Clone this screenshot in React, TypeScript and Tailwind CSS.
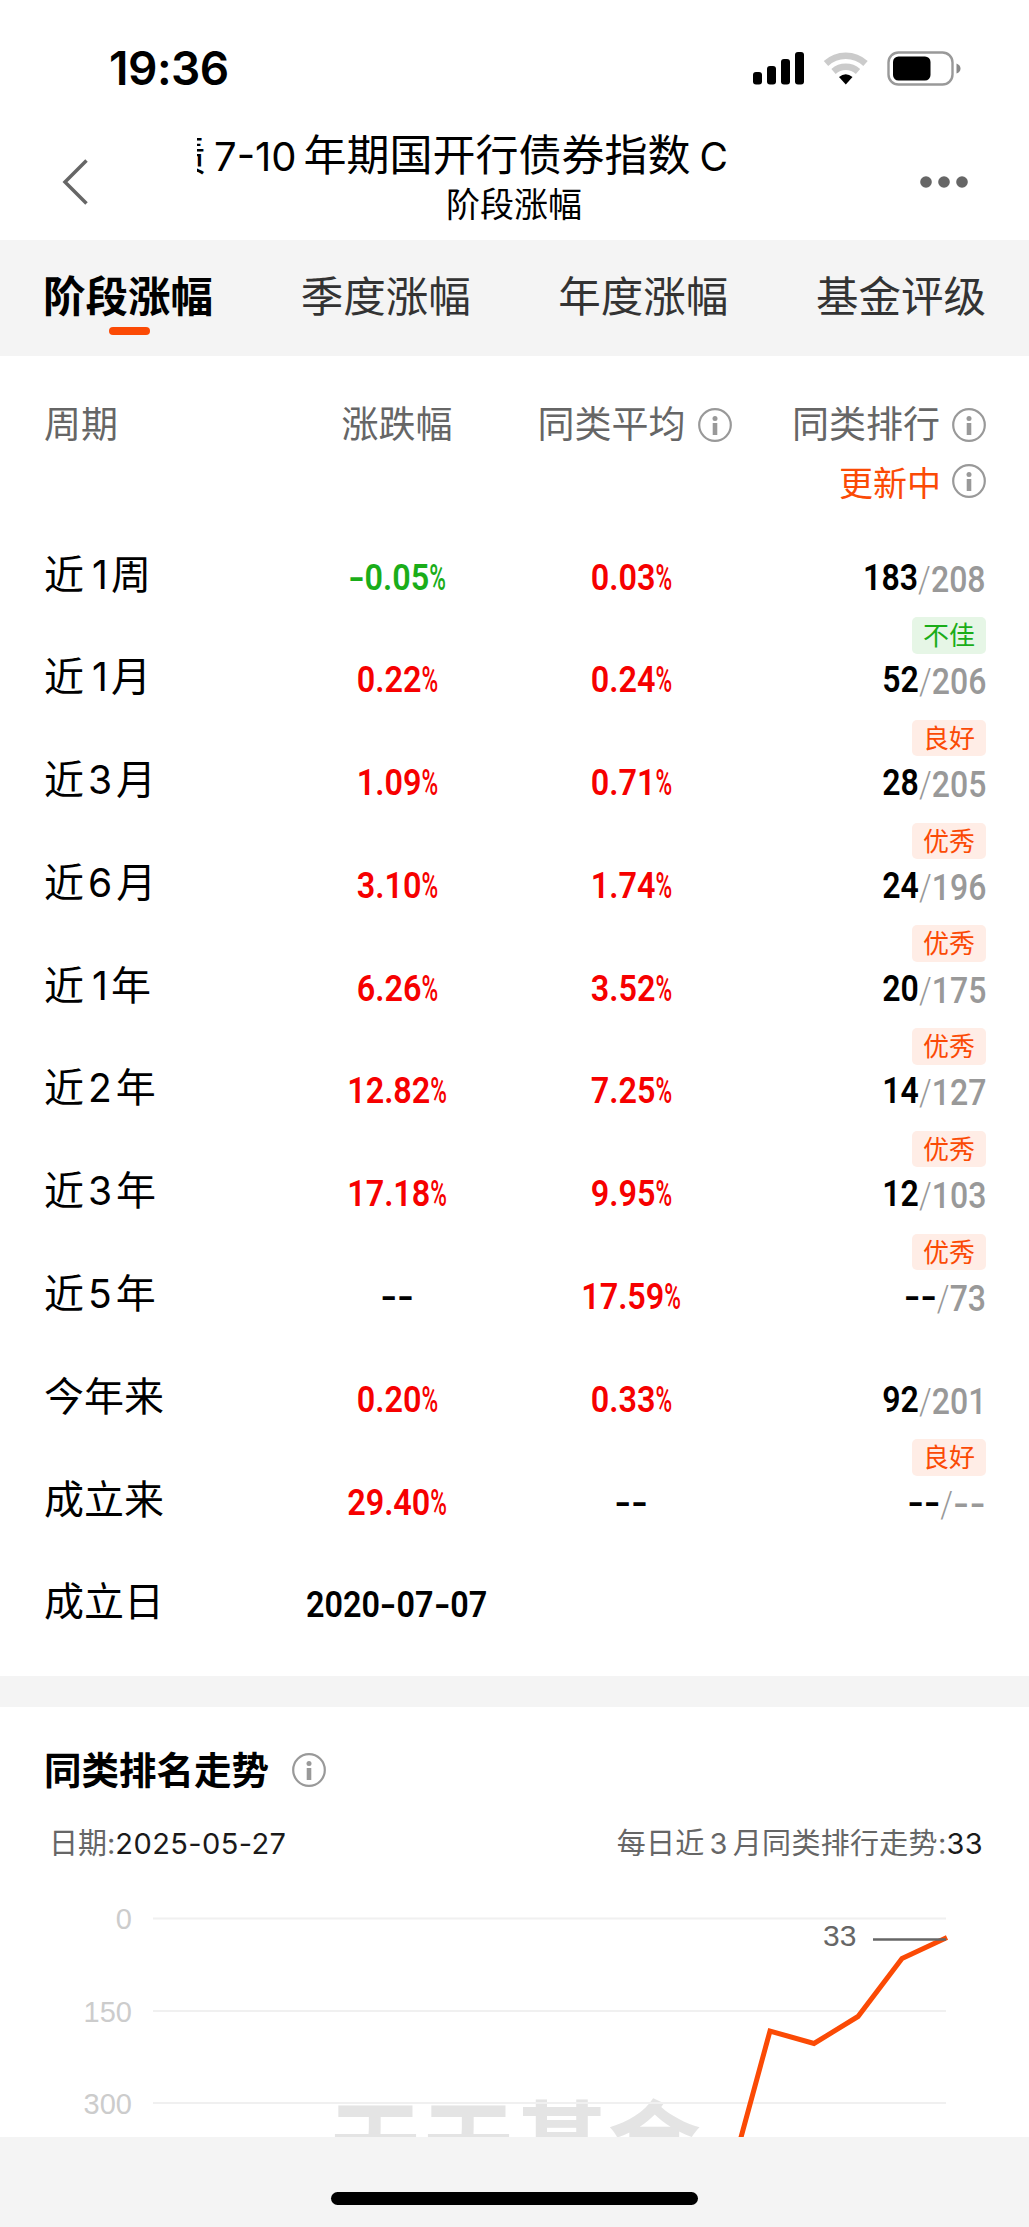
import clsx from 'clsx';

interface Row {
  label: string;
  change: string;
  average?: string;
  rank?: string;
  total?: string;
  grade?: string;
}

const tabs = ['阶段涨幅', '季度涨幅', '年度涨幅', '基金评级'];

const rows: Row[] = [
  { label: '近1周', change: '-0.05%', average: '0.03%', rank: '183', total: '208', grade: '不佳' },
  { label: '近1月', change: '0.22%', average: '0.24%', rank: '52', total: '206', grade: '良好' },
  { label: '近3月', change: '1.09%', average: '0.71%', rank: '28', total: '205', grade: '优秀' },
  { label: '近6月', change: '3.10%', average: '1.74%', rank: '24', total: '196', grade: '优秀' },
  { label: '近1年', change: '6.26%', average: '3.52%', rank: '20', total: '175', grade: '优秀' },
  { label: '近2年', change: '12.82%', average: '7.25%', rank: '14', total: '127', grade: '优秀' },
  { label: '近3年', change: '17.18%', average: '9.95%', rank: '12', total: '103', grade: '优秀' },
  { label: '近5年', change: '--', average: '17.59%', rank: '--', total: '73' },
  { label: '今年来', change: '0.20%', average: '0.33%', rank: '92', total: '201', grade: '良好' },
  { label: '成立来', change: '29.40%', average: '--', rank: '--', total: '--' },
  { label: '成立日', change: '2020-07-07' },
];

const InfoIcon = () => (
  <svg className="size-[34px] shrink-0" viewBox="0 0 34 34" fill="none">
    <circle cx="17" cy="17" r="15.8" stroke="#999" strokeWidth="2.2" />
    <circle cx="17" cy="10.5" r="2.5" fill="#999" />
    <path d="M17 15v12" stroke="#999" strokeWidth="4.6" />
  </svg>
);

// Narrow figures: wide hyphens and a light, condensed percent sign
const Figure = ({ value }: { value: string }) => (
  <>
    {value.split('').map((char, i) => {
      if (char === '-') {
        return (
          <span key={i} className="inline-block w-[19px] text-center">
            <span className="inline-block scale-x-[1.4]">-</span>
          </span>
        );
      }
      if (char === '%') {
        return (
          <span key={i} className="inline-block w-[19px] origin-left scale-x-[.7] font-medium">
            %
          </span>
        );
      }
      return <span key={i}>{char}</span>;
    })}
  </>
);

const valueColor = (value: string) => {
  if (value.startsWith('-0')) return 'text-[#1aad19]';
  return value.endsWith('%') ? 'text-[#f60000]' : 'text-black';
};

const Value = ({ value }: { value: string }) => (
  <div className="flex justify-center pt-[4px]">
    <span
      className={clsx(
        'font-[Roboto,sans-serif] text-[37px] font-semibold leading-[60px] whitespace-nowrap scale-x-[.875]',
        valueColor(value)
      )}
    >
      <Figure value={value} />
    </span>
  </div>
);

const Label = ({ text }: { text: string }) => (
  <div className="pt-[1px] text-[40px] leading-[60px] whitespace-nowrap">
    {text.split('').map((char, i) =>
      /\d/.test(char) ? (
        <span
          key={i}
          className={clsx('text-[39px]', char === '1' ? 'mr-[3px] ml-[8px]' : 'mx-[4px]')}
        >
          {char}
        </span>
      ) : (
        char
      )
    )}
  </div>
);

const StatusBar = () => (
  <div className="flex h-[130px] items-start justify-between pr-[68px] pl-[109px]">
    <span className="mt-[38px] text-[46px] leading-[60px] font-semibold tracking-[-0.5px]">
      19:36
    </span>
    <svg className="mt-[48px] h-[40px] w-[208px]" viewBox="0 0 208 40" fill="none">
      <rect x="0" y="24" width="9" height="12.5" rx="3" fill="#000" />
      <rect x="14" y="18" width="9" height="18.500" rx="3" fill="#000" />
      <rect x="28" y="11" width="9" height="25.500" rx="3" fill="#000" />
      <rect x="42" y="4" width="9" height="32.500" rx="3" fill="#000" />
      <path d="M73 15.500a29 29 0 0 1 39.500 0" stroke="#cbcbcb" strokeWidth="6.500" />
      <path d="M80.500 23.500a18.500 18.500 0 0 1 24.500 0" stroke="#cbcbcb" strokeWidth="6.500" />
      <path d="M86 29q6.800-5.500 13.500 0l-6.700 7.500z" fill="#000" />
      <rect x="135.500" y="4.500" width="64" height="32" rx="10" stroke="#999" strokeWidth="2.400" />
      <rect x="140" y="8.500" width="37.500" height="24" rx="5.500" fill="#000" />
      <path d="M203.500 15.500q4 1.500 4 5t-4 5z" fill="#888" />
    </svg>
  </div>
);

const Header = () => (
  <div className="flex h-[110px] items-start pl-[62px]">
    <svg className="mt-[29px] h-[46px] w-[26px]" viewBox="0 0 26 46" fill="none">
      <path d="M24.500 1.500 3 23l21.500 21.500" stroke="#666" strokeWidth="3.500" />
    </svg>
    <div className="ml-[109px] w-[634px] pt-px">
      <div className="flex h-[50px] items-center overflow-hidden">
        <div className="-ml-[34px] text-[43px] leading-[50px] whitespace-nowrap">
          债<span className="mr-[7px] ml-[8px] text-[40px]">7-10</span>年期国开行债券指数
          <span className="ml-[9px] text-[39px]">C</span>
        </div>
      </div>
      <div className="text-center text-[34px] leading-[47px]">阶段涨幅</div>
    </div>
    <svg className="mt-[46px] ml-[89px] h-[12px] w-[48px]" viewBox="0 0 48 12" fill="#666">
      <circle cx="6" cy="6" r="5.800" />
      <circle cx="24" cy="6" r="5.800" />
      <circle cx="42" cy="6" r="5.800" />
    </svg>
  </div>
);

const RankTrend = () => (
  <section className="h-[430px] overflow-hidden">
    <div className="flex items-center gap-[23px] pt-[36.500px] pl-[44px]">
      <h2 className="pt-[1px] text-[37.5px] leading-[52px] font-bold">同类排名走势</h2>
      <InfoIcon />
    </div>
    <div className="mt-[24px] flex justify-between pr-[46px] pl-[49px] text-[29px] leading-[46px] text-[#666]">
      <div>
        日期:<span className="tracking-[.4px] text-[#1a1a1a]">2025-05-27</span>
      </div>
      <div className="tracking-[.3px]">
        每日近<span className="mx-[5px]">3</span>月同类排行走势:
        <span className="text-[#1a1a1a]">33</span>
      </div>
    </div>
    <svg
      className="mt-[31px] h-[240px] w-full font-['Liberation_Sans','Noto_Sans_CJK_SC',sans-serif]"
      viewBox="0 0 1029 240"
      fill="none"
    >
      <text x="329" y="281" fontSize="93" fontWeight="700" fill="#e4e4e4">
        天天基金
      </text>
      <path d="M153 20.500h793M153 113h793M153 205h793" stroke="#f0f0f0" strokeWidth="2" />
      <g fontSize="29" fill="#ccc" textAnchor="end">
        <text x="132" y="31">0</text>
        <text x="132" y="123.500">150</text>
        <text x="132" y="215.500">300</text>
      </g>
      <text x="823" y="48" fontSize="30" fill="#666">
        33
      </text>
      <path d="M740 243 770 133l44 12.500 44-27 44-58 45-21" stroke="#fb4a05" strokeWidth="5" />
      <path d="M873 41.500h73" stroke="#666" strokeWidth="2.500" />
    </svg>
  </section>
);

const App = () => {
  return (
    <div className="flex h-[2227px] w-[1029px] flex-col overflow-hidden bg-white font-[Inter,'Noto_Sans_CJK_SC',sans-serif] text-black">
      <StatusBar />
      <Header />
      <nav className="flex h-[115.500px] shrink-0 justify-between bg-[#f4f4f4] px-[43px] pt-[27px]">
        {tabs.map((tab, i) => (
          <div key={tab} className="flex flex-col items-center">
            <span
              className={clsx(
                'text-[42.500px] leading-[60px]',
                i === 0 ? 'font-bold' : 'text-[#333]'
              )}
            >
              {tab}
            </span>
            {i === 0 && <span className="ml-[3px] h-[8px] w-[41px] rounded-full bg-[#fb4a05]" />}
          </div>
        ))}
      </nav>

      <section className="h-[1320.500px] shrink-0 px-[44px]">
        <div className="grid h-[188px] grid-cols-[233px_240px_228px_241px] pt-[44px] text-[37px] leading-[50px] text-[#666]">
          <div>周期</div>
          <div className="text-center">涨跌幅</div>
          <div className="flex h-[50px] items-center justify-center gap-[12px] pl-[7px] whitespace-nowrap">
            同类平均
            <InfoIcon />
          </div>
          <div>
            <div className="flex items-center justify-end gap-[12px]">
              同类排行
              <InfoIcon />
            </div>
            <div className="mt-[6px] flex items-center justify-end gap-[11px] text-[34px] text-[#fb4a05]">
              <span className="pt-[5px] leading-[45px]">更新中</span>
              <InfoIcon />
            </div>
          </div>
        </div>
        {rows.map((row) => (
          <div key={row.label} className="grid h-[102.800px] grid-cols-[233px_240px_228px_241px]">
            <Label text={row.label} />
            <Value value={row.change} />
            {row.average && <Value value={row.average} />}
            {row.rank && row.total && (
              <div className="flex flex-col items-end pt-[4px]">
                <div className="origin-right scale-x-[.865] font-[Roboto,sans-serif] text-[37px] leading-[60px] font-semibold whitespace-nowrap">
                  <Figure value={row.rank} />
                  <span className="relative top-[2px] font-medium text-[#999]">
                    <span className="inline-block w-[15px] text-center font-light">/</span>
                    <Figure value={row.total} />
                  </span>
                </div>
                {row.grade && (
                  <span
                    className={clsx(
                      'mt-[9.500px] h-[36.500px] w-[74px] shrink-0 rounded-[5px] text-center text-[26px] leading-[37px]',
                      row.grade === '不佳'
                        ? 'bg-[#e6f6e6] text-[#1aad19]'
                        : 'bg-[#ffede6] text-[#fb4a05]'
                    )}
                  >
                    {row.grade}
                  </span>
                )}
              </div>
            )}
          </div>
        ))}
      </section>

      <div className="h-[31px] shrink-0 bg-[#f4f4f4]" />
      <RankTrend />
      <div className="flex flex-1 justify-center bg-[#f4f4f4] pt-[55px]">
        <div className="h-[13px] w-[367px] rounded-full bg-black" />
      </div>
    </div>
  );
};

export default App;
